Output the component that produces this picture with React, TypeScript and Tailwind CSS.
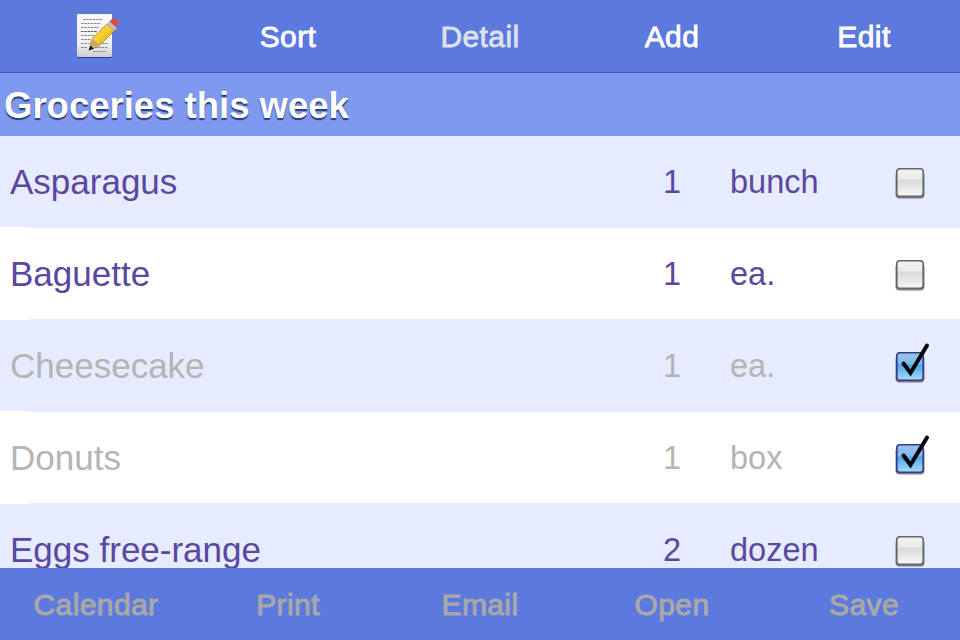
import React from 'react';

interface Item {
    name: string;
    qty: number;
    unit: string;
    done: boolean;
}

const items: Item[] = [
    { name: 'Asparagus', qty: 1, unit: 'bunch', done: false },
    { name: 'Baguette', qty: 1, unit: 'ea.', done: false },
    { name: 'Cheesecake', qty: 1, unit: 'ea.', done: true },
    { name: 'Donuts', qty: 1, unit: 'box', done: true },
    { name: 'Eggs free-range', qty: 2, unit: 'dozen', done: false },
];

const NoteIcon = () => (
    <svg width="50" height="50" viewBox="0 0 50 50" className="block">
        <defs>
            <linearGradient id="paper" x1="0" y1="0" x2="0" y2="1">
                <stop offset="0" stopColor="#fafafa" />
                <stop offset="0.7" stopColor="#f0f0f0" />
                <stop offset="1" stopColor="#c9ccd2" />
            </linearGradient>
            <linearGradient id="pencil" x1="0" y1="0" x2="1" y2="1">
                <stop offset="0" stopColor="#fbe06a" />
                <stop offset="0.5" stopColor="#f6cc2a" />
                <stop offset="1" stopColor="#cf9216" />
            </linearGradient>
        </defs>
        <rect x="6" y="4" width="35" height="43" rx="1" fill="#26346f" opacity="0.85" />
        <rect x="6" y="3" width="35" height="43" rx="1" fill="url(#paper)" />
        <g stroke="#7a7a7a" strokeWidth="0.9" strokeDasharray="2.5 0.8">
            <path d="M12 8.5H31" />
            <path d="M10 12.5H30" />
            <path d="M10 16.5H28" />
            <path d="M10 20.5H26" stroke="#444" />
            <path d="M10 24.5H24" />
            <path d="M10 28.5H20" />
            <path d="M10 32.5H18" />
            <path d="M10 36.5H16" />
            <path d="M28 32.5H37" />
            <path d="M24 36.5H37" />
            <path d="M22 40.5H35" />
        </g>
        <path d="M19 34L21.5 27L36 13L43 20L28.5 34.5L22 37.5Z" fill="url(#pencil)" stroke="#9a7218" strokeWidth="0.7" />
        <path d="M18 38.5L21.5 27.5L28.5 34.5Z" fill="#c9a77c" />
        <path d="M17.5 39.5L19.2 34.5L23 37.8Z" fill="#141414" />
        <path d="M36 13L39 10L46 17L43 20Z" fill="#bdbdbd" />
        <path d="M38.5 10.5L41 8C42.5 7 44.5 7.3 46 8.7C47.7 10.3 48 12.3 47 13.6L45.5 16.5Z" fill="#dd4a44" />
    </svg>
);

const CheckBox = ({ checked }: { checked: boolean }) => (
    <svg width="38" height="44" viewBox="0 0 38 44" className="block mb-[7px]">
        <defs>
            <linearGradient id="boxOff" x1="0" y1="0" x2="0" y2="1">
                <stop offset="0" stopColor="#f2f2f2" />
                <stop offset="0.38" stopColor="#ececea" />
                <stop offset="0.4" stopColor="#d8d9d7" />
                <stop offset="0.85" stopColor="#efefef" />
                <stop offset="1" stopColor="#f8f8f8" />
            </linearGradient>
            <linearGradient id="boxOn" x1="0" y1="0" x2="0" y2="1">
                <stop offset="0" stopColor="#9bc1e8" />
                <stop offset="0.4" stopColor="#7fbcec" />
                <stop offset="0.45" stopColor="#4ea6ea" />
                <stop offset="1" stopColor="#a9dcf8" />
            </linearGradient>
        </defs>
        <rect x="3.5" y="15" width="29" height="27.5" rx="4" fill="#3f3f4a" opacity="0.65" />
        <rect x="4.8" y="12.8" width="26.4" height="27.4" rx="3" fill={checked ? 'url(#boxOn)' : 'url(#boxOff)'} stroke={checked ? '#333a8c' : '#66666a'} strokeWidth="1.6" />
        {checked && <path d="M11.5 23.5L18.5 33L35 5.5" fill="none" stroke="#05060a" strokeWidth="4" strokeLinecap="round" />}
    </svg>
);

const Row = ({ item, tinted }: { item: Item; tinted: boolean }) => (
    <div className={`shrink-0 ${tinted ? 'bg-[#e6ebff]' : 'bg-white'}`}>
        <div className={`h-[91px] flex items-center text-[32.5px] ${item.done ? 'text-[#b4b4b4]' : 'text-[#5a479f]'}`}>
            <span className="w-[624px] pl-[10px] pt-[2px] text-[35px]">{item.name}</span>
            <span className="w-[96px] text-center pt-[2px]">{item.qty}</span>
            <span className="w-[10px]" />
            <span className="w-[161.5px] pt-[2px]">{item.unit}</span>
            <CheckBox checked={item.done} />
        </div>
        <div className="h-px bg-[#e6ebff]">
            <div className="h-px w-[30px] bg-white" />
        </div>
    </div>
);

export default function App() {
    const top = [
        { label: 'Sort', dim: false },
        { label: 'Detail', dim: true },
        { label: 'Add', dim: false },
        { label: 'Edit', dim: false },
    ];
    const bottom = ['Calendar', 'Print', 'Email', 'Open', 'Save'];

    return (
        <div className="w-[960px] h-[640px] flex flex-col overflow-hidden font-['Liberation_Sans',Arial,sans-serif]">
            <div className="h-[73px] shrink-0 bg-[#5c79dd] border-b border-[#3b5cb5] grid grid-cols-5 items-center text-[30px] tracking-[0.4px] [-webkit-text-stroke:0.8px]">
                <div className="flex justify-center">
                    <NoteIcon />
                </div>
                {top.map((b) => (
                    <div key={b.label} className={`text-center ${b.dim ? 'text-[#dfe2ec]' : 'text-white'}`}>
                        {b.label}
                    </div>
                ))}
            </div>
            <div className="h-[63px] shrink-0 bg-[#7f99ee] flex items-center pl-[4px] pt-[4px] font-bold text-[36.5px] text-white [text-shadow:0_2px_1px_#2b3a78]">
                Groceries this week
            </div>
            <div className="flex-1 min-h-0 overflow-hidden">
                {items.map((item, i) => (
                    <Row key={item.name} item={item} tinted={i % 2 === 0} />
                ))}
            </div>
            <div className="h-[72px] shrink-0 bg-[#5c79dd] grid grid-cols-5 items-center text-[30px] tracking-[0.4px] [-webkit-text-stroke:1px] text-[#a8a8a8]">
                {bottom.map((label) => (
                    <div key={label} className="text-center">
                        {label}
                    </div>
                ))}
            </div>
        </div>
    );
}
